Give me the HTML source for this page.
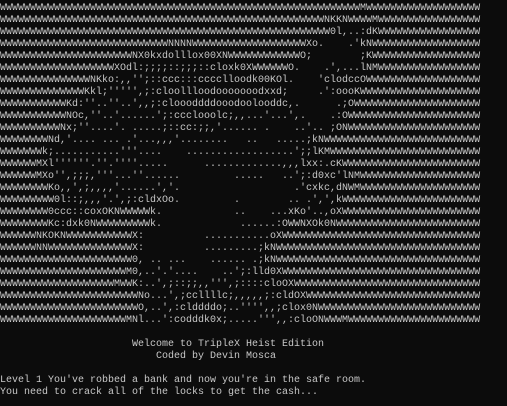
<!DOCTYPE html>
<html><head><meta charset="utf-8"><style>
html,body{margin:0;padding:0;background:#0c0c0c;}
body{width:507px;height:406px;overflow:hidden;}
pre{margin:0;padding:3px 0 0 0;font-family:"Liberation Mono",monospace;font-size:10px;line-height:12px;color:#c8c8c8;white-space:pre;}
</style></head><body><pre>WWWWWWWWWWWWWWWWWWWWWWWWWWWWWWWWWWWWWWWWWWWWWWWWWWWWWWWWWWWWMWWWWWWWWWWWWWWWWWWW
WWWWWWWWWWWWWWWWWWWWWWWWWWWWWWWWWWWWWWWWWWWWWWWWWWWWWWNKKNWWWWMWWWWWWWWWWWWWWWWW
WWWWWWWWWWWWWWWWWWWWWWWWWWWWWWWWWWWWWWWWWWWWWWWWWWWWWWW0l,..:dKWWWWWWWWWWWWWWWWW
WWWWWWWWWWWWWWWWWWWWWWWWWWWWNNNNWWWWWWWWWWWWWWWWWWWXo.    .'kNWWWWWWWWWWWWWWWWWW
WWWWWWWWWWWWWWWWWWWWWWNX0kxdolllox00XNWWWWWWWWWWWWO;        ;KWWWWWWWWWWWWWWWWWW
WWWWWWWWWWWWWWWWWWWXOdl:;;;;::;;;::cloxk0XWWWWWWO.    .',...lNMWWWWWWWWWWWWWWWWW
WWWWWWWWWWWWWWWNKko:,,'';::ccc:::cccclloodk00KOl.    'clodccOWWWWWWWWWWWWWWWWWWW
WWWWWWWWWWWWWWKkl;''''',;:cloollloodooooooodxxd;     .':oooKWWWWWWWWWWWWWWWWWWWW
WWWWWWWWWWWKd:''..''..',,;:cloooddddooodoolooddc,.      .;OWWWWWWWWWWWWWWWWWWWWW
WWWWWWWWWWWNOc,''..'......';:ccclooolc;,,...'...',.    .:OWWWWWWWWWWWWWWWWWWWWWW
WWWWWWWWWWNx;''....'. .....;::cc:;;,'...... .    ..'.. ;ONWWWWWWWWWWWWWWWWWWWWWW
WWWWWWWWNd,'.... ... .'...,,,'........   ..   .....;kNWWWWWWWWWWWWWWWWWWWWWWWWWW
WWWWWWWk;...........'''....    ..................';;lKMWWWWWWWWWWWWWWWWWWWWWWWWW
WWWWWWMXl''''''.''.''''.....      .............,,,lxx:.cKWWWWWWWWWWWWWWWWWWWWWWW
WWWWWWMXo'',;;;,'''...''......         .....   ..';:d0xc'lNMWWWWWWWWWWWWWWWWWWWW
WWWWWWWWKo,,',;,,,,'......','.                   .'cxkc,dNWMWWWWWWWWWWWWWWWWWWWW
WWWWWWWWW0l::;,,,'.',;:cldxOo.         .        .. .',',kWWWWWWWWWWWWWWWWWWWWWWW
WWWWWWWW0ccc::coxOKNWWWWWk.            ..    ...xKo'..,oXWWWWWWWWWWWWWWWWWWWWWWW
WWWWWWWWKc:dxk0NWWWWWWWWWk.             ......:OWWNXOk0NWWWWWWWWWWWWWWWWWWWWWWWW
WWWWWWNKOKNWWWWWWWWWWWX:          ...........oXWWWWWWWWWWWWWWWWWWWWWWWWWWWWWWWWW
WWWWWWNNWWWWWWWWWWWWWWX:          .........;kNWWWWWWWWWWWWWWWWWWWWWWWWWWWWWWWWWW
WWWWWWWWWWWWWWWWWWWWWW0, .. ...    ...... .;kNWWWWWWWWWWWWWWWWWWWWWWWWWWWWWWWWWW
WWWWWWWWWWWWWWWWWWWWWM0,..'.'....    ..';:lld0XWWWWWWWWWWWWWWWWWWWWWWWWWWWWWWWWW
WWWWWWWWWWWWWWWWWWWMWWK:..',;::;;,,''',;::::cloOXWWWWWWWWWWWWWWWWWWWWWWWWWWWWWWW
WWWWWWWWWWWWWWWWWWWWWWWNo...',;ccllllc;,,,,,;:cldOXWWWWWWWWWWWWWWWWWWWWWWWWWWWWW
WWWWWWWWWWWWWWWWWWWWWWWO,..',:clddddo;..'''',,;clox0NWWWWWWWWWWWWWWWWWWWWWWWWWWW
WWWWWWWWWWWWWWWWWWWWWMNl...':codddk0x;.....''',,:cloONWWWMWWWWWWWWWWWWWWWWWWWWWW

                      Welcome to TripleX Heist Edition
                          Coded by Devin Mosca

Level 1 You've robbed a bank and now you're in the safe room.
You need to crack all of the locks to get the cash...</pre></body></html>
